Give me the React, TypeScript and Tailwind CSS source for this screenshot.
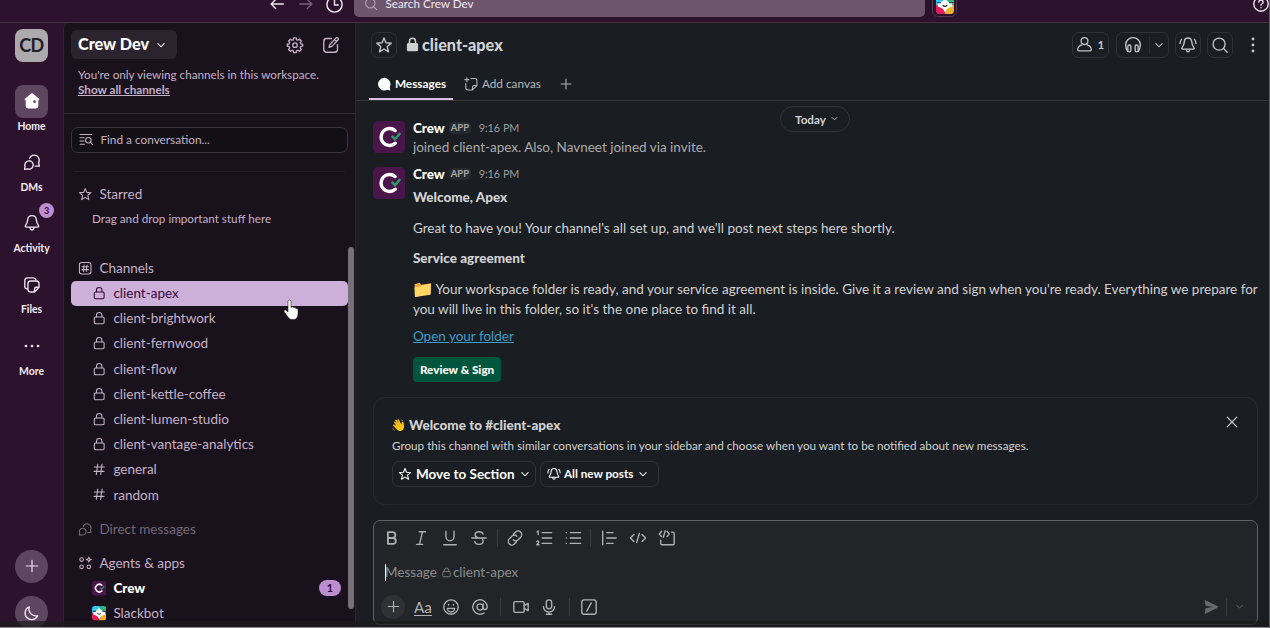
import type { ReactNode } from 'react';

interface IconProps {
  className?: string;
  children: ReactNode;
}

function Icon({ className = 'size-[18px]', children }: IconProps) {
  return (
    <svg
      viewBox="0 0 20 20"
      fill="none"
      stroke="currentColor"
      strokeWidth="1.5"
      strokeLinecap="round"
      strokeLinejoin="round"
      className={`shrink-0 ${className}`}
    >
      {children}
    </svg>
  );
}

type IconOnly = { className?: string };

const Star = ({ className }: IconOnly) => (
  <Icon className={className}>
    <path d="m10 2.2 2.2 5.3 5.9.4-4.5 3.8 1.4 5.9-5-3.2-5 3.2 1.4-5.9-4.5-3.8 5.9-.4z" />
  </Icon>
);

const Lock = ({ className }: IconOnly) => (
  <Icon className={className}>
    <rect x="3.2" y="8.3" width="13.6" height="9.4" rx="1.6" />
    <path d="M6.2 8V5.8a3.8 3.8 0 0 1 7.6 0V8" />
  </Icon>
);

const Hash = ({ className }: IconOnly) => (
  <Icon className={className}>
    <path d="M8 2.8 6 17.2M14 2.8l-2 14.4M3.2 7h14M2.8 13h14" />
  </Icon>
);

const Caret = ({ className }: IconOnly) => (
  <Icon className={className}>
    <path d="m5.5 8 4.5 4.5L14.5 8" />
  </Icon>
);

const Plus = ({ className }: IconOnly) => (
  <Icon className={className}>
    <path d="M10 3v14M3 10h14" />
  </Icon>
);

const Search = ({ className }: IconOnly) => (
  <Icon className={className}>
    <circle cx="9" cy="9" r="6.7" />
    <path d="m14 14 4 4" />
  </Icon>
);

const Chats = ({ className }: IconOnly) => (
  <Icon className={className}>
    <path d="M7.3 5.8a5.6 5.6 0 1 1 10 5l.9 3.7h-4.7" />
    <path d="M1.8 18.2l.5-3.2a4.7 4.7 0 1 1 2.4 2.6z" />
  </Icon>
);

const BellRing = ({ className }: IconOnly) => (
  <Icon className={className}>
    <path d="M10 2.200c-2.300 0-3.900 1.700-4.100 4-.2 3-.8 4.700-2.600 7-.5.700-.1 1.400.7 1.400h12c.8 0 1.200-.7.7-1.400-1.800-2.300-2.400-4-2.600-7-.2-2.300-1.800-4-4.100-4Z" />
    <path d="M8 15c.3 1.700 1 2.500 2 2.500s1.700-.8 2-2.500M3 3.500C1.800 4.900 1.200 6.500 1.200 8.500M17 3.500c1.200 1.400 1.800 3 1.800 5" />
  </Icon>
);

const SlackbotIcon = ({ className }: IconOnly) => (
  <svg viewBox="0 0 20 20" className={`shrink-0 ${className}`}>
    <clipPath id="bot">
      <rect width="20" height="20" rx="4" />
    </clipPath>
    <g clipPath="url(#bot)">
      <path fill="#36c5f0" d="M0 0h10v10H0z" />
      <path fill="#2eb67d" d="M10 0h10v10H10z" />
      <path fill="#e01e5a" d="M0 10h10v10H0z" />
      <path fill="#ecb22e" d="M10 10h10v10H10z" />
      <path fill="#fff" d="M10 1.500c1 3.500 2.800 5 8 6v4.500c-4.500.8-6.500 2.500-8 6.500-1.500-4-3.500-5.700-8-6.500V7.500c5.200-1 7-2.500 8-6Z" />
      <path fill="none" stroke="#1d1c1d" strokeWidth="1.300" strokeLinecap="round" d="M1.500 7.500H5M15 7.500h3.500M7.800 10.500c1.300 1.300 3.100 1.300 4.400 0" />
    </g>
  </svg>
);

const CrewLogo = ({ className }: IconOnly) => (
  <svg viewBox="0 0 32 32" fill="none" className={`shrink-0 ${className}`}>
    <rect width="32" height="32" rx="5" fill="#4a154b" />
    <path d="M21.800 9.400A8.400 8.400 0 1 0 22 22" stroke="#fff" strokeWidth="3.400" strokeLinecap="round" />
    <path d="m18.500 14.800 3.200 3.200 5.300-6.200" stroke="#2a9d6c" strokeWidth="2.400" />
  </svg>
);

const channels = [
  'client-apex',
  'client-brightwork',
  'client-fernwood',
  'client-flow',
  'client-kettle-coffee',
  'client-lumen-studio',
  'client-vantage-analytics',
  'general',
  'random',
];

function TopBar() {
  return (
    <header className="flex h-[23px] shrink-0 border-b border-[#443245] text-[#f0e6f0]">
      <div className="flex w-[354px] shrink-0 items-start justify-end gap-[10.5px] pr-[10px]">
        <Icon className="-mt-[5px] size-[18px]">
          <path d="M17 10H3.500m5-5-5 5 5 5" />
        </Icon>
        <Icon className="-mt-[5px] size-[18px] text-[#78607a]">
          <path d="M3 10h13.500m-5-5 5 5-5 5" />
        </Icon>
        <Icon className="-mt-[5px] size-[19px]">
          <circle cx="10" cy="10" r="8" />
          <path d="M10 5v5.500h4" />
        </Icon>
      </div>
      <div className="flex h-[17px] w-[571px] items-start rounded-b-[5px] bg-[#6d566d] pl-[10px]">
        <Search className="-mt-[3px] size-[14px] text-[#b5a5b6]" />
        <span className="-mt-[5px] ml-[7.5px] text-[11.7px] leading-4">Search Crew Dev</span>
      </div>
      <div className="-mt-2 ml-[7px] flex size-[25px] items-center justify-center rounded-md border border-[#533b54]">
        <SlackbotIcon className="size-[18px]" />
      </div>
      <Icon className="-mt-[5px] ml-auto size-[18px]">
        <circle cx="10" cy="10" r="8" />
        <path d="M7.700 8a2.300 2.300 0 1 1 3.300 2c-.8.4-1 .8-1 1.500M10 14v.2" />
      </Icon>
    </header>
  );
}

function RailItem({ label, children, active, badge }: { label: string; children: ReactNode; active?: boolean; badge?: number }) {
  return (
    <div className="flex h-[61.2px] shrink-0 flex-col items-center">
      <div className={`relative flex size-[33px] items-center justify-center rounded-lg ${active ? 'bg-[#5f4660]' : ''}`}>
        {children}
        {badge && (
          <span className="absolute -top-[4px] -right-[6px] flex size-[15px] items-center justify-center rounded-full bg-[#bb8ed0] text-[9px] font-bold text-[#39063a]">
            {badge}
          </span>
        )}
      </div>
      <span className="mt-[0.4px] text-[10.4px] leading-4 font-bold text-[#f4edf5]">{label}</span>
    </div>
  );
}

function Rail() {
  return (
    <nav className="flex w-[63px] shrink-0 flex-col items-center pt-[6px] text-[#eee3ef]">
      <div className="mb-[22.5px] flex size-[33px] shrink-0 items-center justify-center rounded-lg bg-[#acaaad] text-[18px] font-bold tracking-[-0.5px] text-[#1f2023]">
        CD
      </div>
      <RailItem label="Home" active>
        <svg viewBox="0 0 20 20" className="size-[18px]">
          <path fill="#fff" d="M9 1.800a1.500 1.500 0 0 1 2 0l6.800 5.700c.8.800.4 1.700-.6 1.700H17v6.300a2.700 2.700 0 0 1-2.700 2.700H5.700A2.700 2.700 0 0 1 3 15.500V9.200h-.2c-1 0-1.400-1-.6-1.700z" />
          <circle cx="12.800" cy="10.800" r="1.500" fill="#5f4660" />
        </svg>
      </RailItem>
      <RailItem label="DMs">
        <Chats />
      </RailItem>
      <RailItem label="Activity" badge={3}>
        <Icon>
          <path d="M10 1.800c-3 0-4.700 2.200-4.900 4.800-.2 2.700-.8 4-2.300 6.300-.5.800-.1 1.600.8 1.600h12.800c.9 0 1.300-.8.8-1.600-1.500-2.300-2.100-3.600-2.300-6.300C14.700 4 13 1.800 10 1.800ZM7.700 15c.3 1.900 1 2.800 2.300 2.800s2-.9 2.300-2.800" />
        </Icon>
      </RailItem>
      <RailItem label="Files">
        <Icon>
          <path d="M4.800 14.300A3 3 0 0 1 2 11.300V5a3 3 0 0 1 3-3h6.500a3 3 0 0 1 2.800 2.200" />
          <path d="M8.500 5.500h6.300a3 3 0 0 1 3 3v4l-5 5.300H8.500a3 3 0 0 1-3-3V8.500a3 3 0 0 1 3-3ZM12.800 17.500v-3a2 2 0 0 1 2-2h3" />
        </Icon>
      </RailItem>
      <RailItem label="More">
        <svg viewBox="0 0 20 20" fill="currentColor" className="size-[18px]">
          <circle cx="3.300" cy="10" r="1.500" />
          <circle cx="10" cy="10" r="1.500" />
          <circle cx="16.700" cy="10" r="1.500" />
        </svg>
      </RailItem>
      <div className="mt-[159.5px] flex size-[33px] shrink-0 items-center justify-center rounded-full bg-[#5f4660]">
        <Plus className="size-[16px]" />
      </div>
      <div className="mt-[13.5px] flex size-[33px] shrink-0 items-center justify-center rounded-full bg-[#5f4660]">
        <Icon>
          <path d="M7 3.200c-1.600 5.800 2.700 11 9.300 9.700A7.300 7.300 0 1 1 7 3.200Z" />
        </Icon>
      </div>
    </nav>
  );
}

function Sidebar() {
  return (
    <aside className="relative flex w-[293px] shrink-0 flex-col rounded-tl-md border-r border-l border-[#2c242f] bg-[#19111c] text-[13.5px] text-[#c5b1c8]">
      <div className="h-[91px] shrink-0 border-b border-[#352c38] pt-[7px]">
        <div className="flex items-center pl-[7px]">
          <button className="flex h-[29px] w-[106px] items-center rounded-md bg-[#2b242e] pl-[7px] text-[16.2px] font-black text-white">
            Crew Dev
            <Caret className="ml-[5px] size-[14px]" />
          </button>
          <Icon className="ml-[109px] size-[18px]">
            <path d="M8.600 2h2.800l.5 2.200 1.300.5 1.900-1.200 2 2-1.300 1.900.6 1.300 2.100.5v2l-2.100.6-.6 1.300 1.200 1.900-2 2-1.900-1.200-1.300.6-.5 2.100H8.600l-.5-2.100-1.300-.6L4.900 17l-2-2 1.200-1.900-.5-1.300-2.200-.6v-2l2.200-.5.5-1.300-1.200-1.900 2-2 1.900 1.200 1.300-.5z" />
            <circle cx="10" cy="10.200" r="2.500" />
          </Icon>
          <Icon className="ml-[18px] size-[18px]">
            <path d="M10.500 2.800H5a3 3 0 0 0-3 3V15a3 3 0 0 0 3 3h9.200a3 3 0 0 0 3-3V9.500" />
            <path d="M15.600 2.300a1.400 1.400 0 0 1 2.100 2.100L11 11.500l-3.200 1 1-3.200zM14 4l2 2" />
          </Icon>
        </div>
        <p className="mt-[7.5px] pl-[14px] text-[11.7px] leading-[15.5px] whitespace-nowrap">
          You're only viewing channels in this workspace.
          <br />
          <a className="font-bold underline">Show all channels</a>
        </p>
      </div>

      <div className="mx-[7px] mt-[12.5px] flex h-[26px] w-[276.5px] shrink-0 items-center rounded-[7px] border border-[#39333b] bg-[#121014] pl-[7px] text-[11.8px]">
        <Icon className="size-[14.4px]">
          <path d="M1.500 3.500h16M1.500 8H7M1.500 12.500H7M1.500 17h6" />
          <circle cx="13" cy="11.500" r="3.800" />
          <path d="m16 14.500 3 3" />
        </Icon>
        <span className="ml-[7px]">Find a conversation...</span>
      </div>
      <div className="mx-[10px] mt-[18px] h-px shrink-0 bg-[#251c29]" />

      <div className="mt-[10.5px] flex h-[25px] shrink-0 items-center gap-[7px] pl-[14px]">
        <Star className="size-[14.4px]" />
        Starred
      </div>
      <div className="h-[25px] shrink-0 pl-[28px] text-[11.7px] leading-[22px]">Drag and drop important stuff here</div>

      <div className="mt-[23px] flex h-[25.6px] shrink-0 items-center gap-[7px] pl-[14px]">
        <Icon className="size-[14.4px]">
          <rect x="2" y="2" width="16" height="16" rx="3" />
          <path d="m8.500 5.500-1 9M12.500 5.500l-1 9M5.500 8h9M5.500 12h9" />
        </Icon>
        Channels
      </div>
      {channels.map((name, i) => (
        <div
          key={name}
          className={`mx-[7px] flex h-[25.2px] w-[276.5px] shrink-0 items-center gap-[7px] rounded-[5px] pl-[21px] ${i === 0 ? 'bg-[#ccb0d9] text-[#39063a]' : ''}`}
        >
          {name.startsWith('client') ? <Lock className="size-[14.4px]" /> : <Hash className="size-[14.4px]" />}
          {name}
        </div>
      ))}
      <div className="mt-[9.3px] flex h-[25px] shrink-0 items-center gap-[7px] pl-[14px] text-[#75687a]">
        <Chats className="size-[14.4px]" />
        Direct messages
      </div>
      <div className="mt-[9.2px] flex h-[25px] shrink-0 items-center gap-[7px] pl-[14px]">
        <Icon className="size-[14.4px]">
          <circle cx="5" cy="5" r="2.500" />
          <circle cx="5" cy="15" r="2.500" />
          <circle cx="15" cy="15" r="2.500" />
          <path d="m15 1.500 1 2.500 2.500 1-2.500 1-1 2.500L14 6l-2.500-1L14 4z" />
        </Icon>
        Agents &amp; apps
      </div>
      <div className="flex h-[25.2px] shrink-0 items-center pr-[14px] pl-[28px] font-black text-white">
        <CrewLogo className="mr-[7px] size-[14.4px]" />
        Crew
        <span className="ml-auto flex h-[16px] w-[22px] items-center justify-center rounded-full bg-[#bb8ed0] text-[11px] font-bold text-[#39063a]">
          1
        </span>
      </div>
      <div className="flex h-[25.2px] shrink-0 items-center pl-[28px]">
        <SlackbotIcon className="mr-[7px] size-[14.4px]" />
        Slackbot
      </div>

      {/* scrollbar thumb */}
      <div className="absolute top-[224px] right-px h-[362px] w-[6.5px] rounded-full bg-[#777079]" />
      <svg viewBox="0 0 16 22" className="absolute top-[276px] left-[219px] h-[22px] w-[16px]">
        <path
          d="M5 2.500c0-2 3-2 3 0v6c.5-1 2.500-.8 2.700.3.700-.7 2.200-.3 2.300.8.800-.5 2 0 2 1.200V15c0 3-1.500 5.500-4.500 5.500H9c-2 0-3-1-4-2.500L1.300 13c-1-1.500.7-2.700 2-1.500L5 13z"
          fill="#fff"
          stroke="#222"
          strokeWidth=".6"
        />
      </svg>
    </aside>
  );
}

function ChannelHeader() {
  const box = 'flex h-[26px] items-center justify-center rounded-[7px] border border-[#2f3236]';
  return (
    <div className="h-[78px] shrink-0 border-b border-[#35363a]">
      <div className="flex h-[43.5px] items-center pr-[8.5px] pl-[15px] text-[#c3c4c6]">
        <div className={`${box} w-[26px]`}>
          <Star />
        </div>
        <svg viewBox="0 0 20 20" className="ml-[7.5px] size-[15px] shrink-0">
          <rect x="2.500" y="8" width="15" height="11" rx="2" fill="#cfd0d1" />
          <path d="M6 9V5.500a4 4 0 0 1 8 0V9" fill="none" stroke="#cfd0d1" strokeWidth="2" />
        </svg>
        <h1 className="ml-[2.5px] text-[16.2px] font-black text-[#d1d2d3]">client-apex</h1>
        <div className={`${box} ml-auto w-[37px] gap-[5px] text-[11.7px] font-bold`}>
          <Icon className="size-[17px]">
            <circle cx="10" cy="6" r="4" />
            <path d="M7 10.500c-3 .8-5 3-5 5.500 0 1 .5 1.500 1.500 1.500h13c1 0 1.500-.5 1.500-1.500 0-2.500-2-4.700-5-5.500" />
          </Icon>
          1
        </div>
        <div className={`${box} ml-[7px] w-[53px] pl-[5px]`}>
          <Icon>
            <path d="M4 17A12 12 0 0 1 1.800 10a8.200 8.200 0 0 1 16.400 0c0 3-1 5-2.200 7" />
            <rect x="4.300" y="10" width="3.300" height="7.700" rx="1.500" />
            <rect x="12.400" y="10" width="3.300" height="7.700" rx="1.500" />
          </Icon>
          <span className="mr-[2px] ml-[7px] h-[18px] w-px bg-[#2a2c30]" />
          <Caret className="size-[14px]" />
        </div>
        <div className={`${box} ml-[6px] w-[26px]`}>
          <BellRing />
        </div>
        <div className={`${box} ml-[6.5px] w-[26px]`}>
          <Search />
        </div>
        <svg viewBox="0 0 20 20" fill="currentColor" className="ml-[10.5px] size-[18px]">
          <circle cx="10" cy="3.300" r="1.600" />
          <circle cx="10" cy="10" r="1.600" />
          <circle cx="10" cy="16.700" r="1.600" />
        </svg>
      </div>
      <div className="flex h-[33.5px] pl-[13px] text-[11.8px] text-[#b6b7b9]">
        <div className="flex w-[84px] items-center border-b-2 border-[#dcbfe2] pt-[3px] pl-[7.5px] font-bold text-white">
          <svg viewBox="0 0 20 20" className="mr-[4px] size-[14.4px]">
            <path fill="#fff" d="M10 1.200a8.800 8.800 0 0 1 7.700 13l.8 3.800c.1.400-.1.700-.5.600l-3.700-.8A8.800 8.800 0 1 1 10 1.200Z" />
          </svg>
          Messages
        </div>
        <div className="ml-[10.5px] flex items-center pt-px">
          <Icon className="mr-[4px] size-[14.4px]">
            <path d="M2.500 9v6a3 3 0 0 0 3 3h6.300l6.200-6V5a3 3 0 0 0-3-3H9.500M11.800 17.700V14a2.300 2.300 0 0 1 2.300-2.300H18M4 1v5.500M1.200 3.700h5.600" />
          </Icon>
          Add canvas
        </div>
        <div className="ml-[18px] flex items-center pt-px">
          <Plus className="size-[14px]" />
        </div>
      </div>
    </div>
  );
}

function MessageHead() {
  return (
    <div className="flex h-[18px] items-center">
      <span className="font-black text-white">Crew</span>
      <span className="ml-[4px] rounded-sm bg-[#26292d] px-[2px] text-[9.5px] leading-[12px] font-bold text-[#ababad]">APP</span>
      <span className="ml-[7.5px] text-[10.8px] text-[#9b9c9e]">9:16 PM</span>
    </div>
  );
}

function Messages() {
  return (
    <div className="relative flex h-[296px] shrink-0 flex-col pl-[17px] text-[13.5px] leading-[20px] text-[#d1d2d3]">
      <div className="absolute top-[5px] left-[424px] flex h-[26px] w-[70px] items-center justify-center rounded-full border border-[#303337] bg-[#1a1d21] pb-px pl-[5px] text-[11.7px] font-bold">
        Today
        <Caret className="ml-[3px] size-[11px]" />
      </div>
      <div className="flex h-[46.5px] pt-[18px]">
        <CrewLogo className="mt-[2px] size-[32.4px]" />
        <div className="ml-[7.5px]">
          <MessageHead />
          <p className="text-[#ababad]">joined client-apex. Also, Navneet joined via invite.</p>
        </div>
      </div>
      <div className="flex pt-[17.5px]">
        <CrewLogo className="mt-[2px] size-[32.4px]" />
        <div className="ml-[7.5px] flex flex-col items-start whitespace-nowrap">
          <MessageHead />
          <p className="mt-[4px] font-black">Welcome, Apex</p>
          <p className="mt-[11px]">Great to have you! Your channel's all set up, and we'll post next steps here shortly.</p>
          <p className="mt-[10px] font-black">Service agreement</p>
          <div className="mt-[11px]">
            <div className="flex h-[20px] items-center">
              <svg viewBox="0 0 20 20" className="mr-[3.5px] size-[19px]">
                <path fill="#f2a93b" d="M1.500 4.500 7 3l1.500 2L19 3.500 18.500 14 3 18z" />
                <path fill="#ffd666" d="m1.500 8 6.500-1L9.500 5.500 19 4l-.5 11.500L2 18z" />
              </svg>
              Your workspace folder is ready, and your service agreement is inside. Give it a review and sign when you're ready. Everything we prepare for
            </div>
            <p>you will live in this folder, so it's the one place to find it all.</p>
          </div>
          <a className="mt-[7px] text-[#3f9dc4] underline">Open your folder</a>
          <button className="mt-[10.5px] h-[25px] rounded-[4px] bg-[#00553d] px-[7px] pb-px text-[11.7px] font-black text-white">
            Review &amp; Sign
          </button>
        </div>
      </div>
    </div>
  );
}

function WelcomeCard() {
  return (
    <section className="mr-[12px] ml-[17px] h-[108px] shrink-0 rounded-xl border border-[#26292d] pt-[17px] pr-[17px] pl-[18px] text-[11.7px] text-[#d1d2d3]">
      <div className="flex h-[20px] items-center text-[13.5px] font-black">
        <svg viewBox="0 0 20 20" className="mr-[3px] size-[14px]">
          <path
            fill="#fcc21b"
            d="M5.500 10 3 6.500c-.8-1.200.8-2.300 1.600-1.200L7.500 9 4.800 4c-.7-1.300 1-2.200 1.800-1L10 8 8 3.200c-.5-1.300 1.300-2 1.900-.7l3.600 7c.3-1.400.3-3 1-3.700.9-.9 2 .1 2.100 1.500.3 3 1.700 6-.6 9-2.500 3-6.500 2.600-9 0L1.800 11c-.9-1.100.6-2.300 1.600-1.300L5 11z"
          />
          <path stroke="#e59600" strokeWidth=".8" fill="none" d="m7.500 9 2 2.500M10 8l1.700 2.500M5.300 10.500l2.400 3" />
          <path stroke="#9fb8c4" strokeWidth="1" fill="none" d="M13 2.500c1.500.5 2.300 1.300 2.700 2.500M1 14.500c.5 1.700 1.600 2.700 3 3" />
        </svg>
        Welcome to #client-apex
        <Icon className="-mt-[6px] ml-auto size-[16px]">
          <path d="m4 4 12 12M16 4 4 16" />
        </Icon>
      </div>
      <p className="leading-5">
        Group this channel with similar conversations in your sidebar and choose when you want to be notified about new messages.
      </p>
      <div className="mt-[6px] flex gap-[3.5px] text-white">
        <button className="flex h-[26px] w-[144px] items-center rounded-[7px] border border-[#2f3236] pl-[5px] text-[13.5px] font-bold">
          <Star className="mr-[4px] size-[14px]" />
          Move to Section
          <Caret className="ml-[3px] size-[14px]" />
        </button>
        <button className="flex h-[26px] w-[119.5px] items-center rounded-[7px] border border-[#2f3236] pl-[6.5px] text-[11.7px] font-bold">
          <BellRing className="mr-[3px] size-[14px]" />
          All new posts
          <Caret className="ml-[3px] size-[14px]" />
        </button>
      </div>
    </section>
  );
}

function Composer() {
  const sep = 'h-[18px] w-px shrink-0 bg-[#383a3d]';
  return (
    <section className="mt-[15px] mr-[12px] ml-[17px] flex h-[105px] shrink-0 flex-col rounded-[7px] border border-[#606265] bg-[#222427] text-[#b0b1b3]">
      <div className="flex h-[34px] items-center gap-[10.9px] pl-[9px]">
        <Icon>
          <path strokeWidth="2" d="M5.500 3.500h5a3.200 3.200 0 0 1 0 6.500h-5zM5.500 10h6a3.300 3.300 0 0 1 0 6.500h-6z" />
        </Icon>
        <Icon>
          <path d="M8 3h7M5 17h7M11.700 3 8.300 17" />
        </Icon>
        <Icon>
          <path d="M5.500 2.500v6a4.500 4.500 0 0 0 9 0v-6M3 17.500h14" />
        </Icon>
        <Icon>
          <path d="M14.500 5.500C13.800 3.800 12.200 3 10 3 7.500 3 5.700 4.200 5.700 6.300c0 1.500 1 2.600 3 3.300M2 10h16M5.300 14c.5 2 2.300 3 4.700 3 2.600 0 4.600-1.200 4.600-3.500 0-.7-.2-1.300-.6-1.800" />
        </Icon>
        <span className={`${sep} -ml-[2px]`} />
        <Icon className="-ml-[2px] size-[18px]">
          <path d="m8.500 5.500 2-2a3.900 3.900 0 0 1 5.800 5.600L13.500 12A3.900 3.900 0 0 1 8 12M11.500 14.500l-2 2A3.900 3.900 0 0 1 3.700 11l2.800-3A3.900 3.900 0 0 1 12 8" />
        </Icon>
        <Icon>
          <path d="M8 4h10.500M8 10h10.500M8 16h10.500M2.300 3l1.200-.8v4M2 13.800c1.500-1.300 3 .2 1.800 1.600L2 17.500h2.500" />
        </Icon>
        <Icon>
          <path d="M7 4h11.500M7 10h11.500M7 16h11.500M2.500 4h.1M2.500 10h.1M2.500 16h.1" />
        </Icon>
        <span className={`${sep} -ml-[3px]`} />
        <Icon className="-ml-[2px] size-[18px]">
          <path d="M3 2.500v15M7.500 4h7M7.500 10h10.500M7.500 16h7" />
        </Icon>
        <Icon>
          <path d="m5.500 6-4 4 4 4M14.500 6l4 4-4 4M11.500 5l-3 10" />
        </Icon>
        <Icon>
          <path d="m4 2.500-2.500 3L4 8.500M10 2.500l2.500 3-2.500 3M8 2 6 9M15 3.500h1.500a1.500 1.500 0 0 1 1.500 1.500v11a1.500 1.500 0 0 1-1.500 1.500h-12A1.500 1.500 0 0 1 3 16v-3.500" />
        </Icon>
      </div>
      <div className="flex h-[33px] items-center pt-px pl-[11px] text-[13.5px] text-[#8b8c8f]">
        <span className="-mr-px h-[17px] w-px bg-white" />
        Message
        <Lock className="mr-px ml-[4px] size-[11px]" />
        client-apex
      </div>
      <div className="flex h-[36px] items-center pt-px pr-[11px] pl-[7px]">
        <div className="flex size-[24px] items-center justify-center rounded-full bg-[#2f3135]">
          <Plus className="size-[15px]" />
        </div>
        <span className="ml-[9px] h-[18px] border-b border-[#b0b1b3] text-[15.3px] leading-[18px]">Aa</span>
        <Icon className="ml-[10px] size-[18px]">
          <circle cx="10" cy="10" r="8" />
          <path d="M6 11.500a4 4 0 0 0 8 0zM7.300 7v.8M12.700 7v.8" />
        </Icon>
        <Icon className="ml-[11px] size-[18px]">
          <circle cx="10" cy="10" r="3.400" />
          <path d="M13.400 6.600v4.200c0 3 4.600 2.500 4.600-.8a8 8 0 1 0-3.500 6.600" />
        </Icon>
        <span className={`${sep} ml-[11px]`} />
        <Icon className="ml-[11px] size-[18px]">
          <rect x="2" y="4" width="11.500" height="12" rx="1.500" />
          <path d="m13.500 8.500 4.500-2.500v8l-4.500-2.500" />
        </Icon>
        <Icon className="ml-[10.5px] size-[18px]">
          <rect x="7" y="2" width="6" height="10" rx="3" />
          <path d="M3.800 9.500a6.200 6.200 0 0 0 12.400 0M10 15.700V18M7 18h6" />
        </Icon>
        <span className={`${sep} ml-[11px]`} />
        <Icon className="ml-[10px] size-[18px]">
          <rect x="2" y="2" width="16" height="16" rx="2.500" />
          <path d="M12.500 5.500 7.500 14.500" />
        </Icon>
        <svg viewBox="0 0 20 20" className="ml-auto size-[16px]" fill="#66686b">
          <path d="M2 2.300c0-.7.500-1 1.200-.7l15 7.500c.8.400.8 1.300 0 1.700l-15 7.600c-.7.300-1.200 0-1.200-.7l1.200-6.200L12 10 3.200 8.500z" />
        </svg>
        <span className={`${sep} ml-[7px]`} />
        <Caret className="ml-[6px] size-[13px] text-[#66686b]" />
      </div>
    </section>
  );
}

export default function App() {
  return (
    <div className="relative flex h-[628px] w-[1270px] flex-col overflow-hidden bg-[#2c122c] font-[Lato,sans-serif]">
      <TopBar />
      <div className="flex h-[605px]">
        <Rail />
        <Sidebar />
        <main className="flex min-w-0 grow flex-col bg-[#1a1d21]">
          <ChannelHeader />
          <Messages />
          <WelcomeCard />
          <Composer />
        </main>
      </div>
      {/* window edges */}
      <div className="absolute bottom-0 left-0 h-[7px] w-full border-b border-[#8b8a8c] bg-[#1d1b1e]/70" />
      <div className="absolute top-0 right-0 h-full w-px bg-[#5a5b5e]" />
    </div>
  );
}
